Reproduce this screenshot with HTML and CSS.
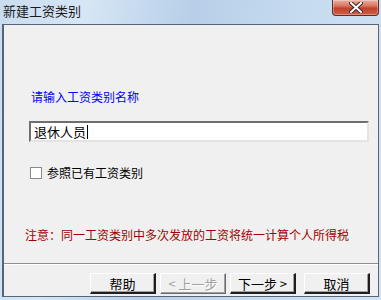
FILE: index.html
```html
<!DOCTYPE html>
<html lang="zh-CN">
<head>
  <meta charset="UTF-8">
  <title>新建工资类别</title>
  <link rel="stylesheet" href="styles.css">
</head>
<body>
  <div class="window">
    <div class="titlebar">
      <span class="title">新建工资类别</span>
      <div class="close" role="button" aria-label="关闭">
        <svg width="14" height="11" viewBox="0 0 14 11">
          <path d="M2 1 L12 10 M12 1 L2 10" stroke="#3a2a2a" stroke-width="4" stroke-linecap="square"/>
          <path d="M2 1 L12 10 M12 1 L2 10" stroke="#fff" stroke-width="2" stroke-linecap="square"/>
        </svg>
      </div>
    </div>

    <div class="client">
      <div class="content">
        <div class="prompt">请输入工资类别名称</div>
        <div class="field">退休人员<span class="caret"></span></div>
        <label class="check">
          <span class="box"></span>
          <span>参照已有工资类别</span>
        </label>
        <div class="note">注意：同一工资类别中多次发放的工资将统一计算个人所得税</div>
      </div>

      <div class="separator"></div>

      <div class="buttons">
        <button class="btn">帮助</button>
        <button class="btn disabled">&lt; 上一步</button>
        <button class="btn next">下一步 &gt;</button>
        <button class="btn cancel">取消</button>
      </div>
    </div>
  </div>
</body>
</html>
```

FILE: styles.css
```css
* { box-sizing: border-box; }

body {
  margin: 0;
  font-family: "Noto Sans CJK SC", "Noto Sans", sans-serif;
  font-size: 12px;
}

.window {
  width: 381px;
  height: 300px;
  display: flex;
  flex-direction: column;
  padding: 0 2px 3px 2px;
  background: linear-gradient(100deg, #c9dcef 0%, #d6e6f5 20%, #b7cfe8 45%, #c6dbef 70%, #d2e3f4 100%);
}

.titlebar {
  height: 24px;
  display: flex;
  align-items: flex-start;
  flex-shrink: 0;
}
.title {
  flex: 1;
  margin: 2px 0 0 1px;
  font-size: 13px;
  line-height: 17px;
  color: #1b1b1b;
}
.close {
  flex: 0 0 47px;
  height: 16px;
  border: 1px solid #5e2d27;
  border-top: none;
  border-radius: 0 0 4px 4px;
  background: linear-gradient(#eab0a2 0%, #d87560 40%, #c2412a 55%, #d0604a 100%);
  display: flex;
  align-items: center;
  justify-content: center;
  box-shadow: inset 0 0 0 1px rgba(255,255,255,0.3);
}

.client {
  flex: 1;
  display: flex;
  flex-direction: column;
  background: #f0f0f0;
  border: 1px solid #56657a;
  border-left-width: 2px;
}

.content {
  flex: 1;
  padding: 64px 0 0 21px;
}

.prompt {
  margin-left: 6px;
  line-height: 16px;
  color: #0000ff;
}

.field {
  margin: 16px 0 0 4px;
  width: 340px;
  height: 21px;
  background: #fff;
  border-top: 2px solid #6e6e6e;
  border-left: 2px solid #6e6e6e;
  border-right: 2px solid #e3e3e3;
  border-bottom: 2px solid #e3e3e3;
  padding: 0 0 0 3px;
  line-height: 17px;
  font-size: 13px;
  color: #000;
  display: flex;
  align-items: center;
}
.caret {
  width: 1px;
  height: 14px;
  background: #000;
  margin-left: 1px;
}

.check {
  margin: 23px 0 0 5px;
  display: flex;
  align-items: center;
  gap: 5px;
  line-height: 16px;
  color: #000;
}
.box {
  width: 12px;
  height: 12px;
  background: #fff;
  border: 1px solid #8a8a8a;
}

.note {
  margin: 46px 0 0 0;
  line-height: 16px;
  color: #a00000;
}

.separator {
  height: 2px;
  border-top: 1px solid #8e8e8e;
  border-bottom: 1px solid #ffffff;
  flex-shrink: 0;
}

.buttons {
  height: 31px;
  display: flex;
  justify-content: flex-end;
  align-items: flex-start;
  padding: 8px 8px 0 0;
  gap: 4px;
}
.btn {
  width: 66px;
  height: 21px;
  padding: 0;
  font-family: inherit;
  font-size: 13px;
  line-height: 17px;
  color: #000;
  background: #f0f0f0;
  border-top: 1px solid #fff;
  border-left: 1px solid #fff;
  border-right: 2px solid #1e1e1e;
  border-bottom: 2px solid #1e1e1e;
  box-shadow: inset -1px -1px 0 #a0a0a0;
}
.btn.disabled {
  color: #a0a0a0;
  text-shadow: 1px 1px 0 #fff;
  border-right: 1px solid #6a6a6a;
  border-bottom: 1px solid #6a6a6a;
}
.btn.cancel { margin-left: 4px; }
```
